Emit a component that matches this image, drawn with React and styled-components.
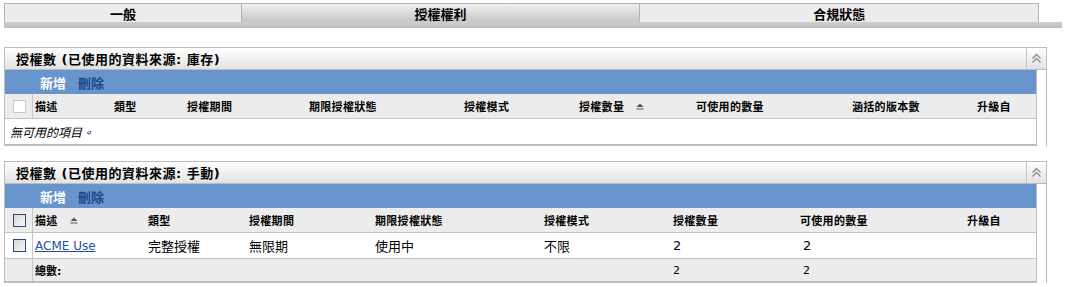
import React from "react";
import styled, { createGlobalStyle } from "styled-components";

const GlobalStyle = createGlobalStyle`
  body {
    margin: 0;
    background: #fff;
    font-family: "DejaVu Sans", "Noto Sans CJK TC", sans-serif;
    color: #000;
  }
`

const Page = styled.div`
  padding: 3px 0 0 4px;
`

const TabRow = styled.div`
  display: flex;
  width: 1035px;
  height: 19px;
`

const Tab = styled.div`
  box-sizing: border-box;
  width: ${p => p.w}px;
  margin-left: ${p => p.first ? 0 : -1}px;
  border: 1px solid #b4b4b4;
  border-bottom: none;
  background: ${p => p.active ? "linear-gradient(#f0f0f0, #c6c6c6)" : "#ececec"};
  display: flex;
  align-items: center;
  justify-content: center;
  font-size: 13px;
  font-weight: 700;
`

const TabBase = styled.div`
  width: 1058px;
  height: 6px;
  background: linear-gradient(#cfcfcf, #bcbcbc);
`

const Panel = styled.div`
  width: 1043px;
  margin-top: ${p => p.gap}px;
`

const PanelHeader = styled.div`
  box-sizing: border-box;
  height: 23px;
  display: flex;
  align-items: stretch;
  border: 1px solid #bcbcbc;
  background: linear-gradient(#ffffff, #e2e2e2);
`

const PanelTitle = styled.div`
  flex: 1;
  display: flex;
  align-items: center;
  padding-left: 11px;
  font-size: 13px;
  font-weight: 700;
  letter-spacing: 0.5px;
`

const CollapseButton = styled.div`
  width: 19px;
  border-left: 1px solid #c4c4c4;
  display: flex;
  align-items: center;
  justify-content: center;
`

const PanelBody = styled.div`
  display: flex;
`

const Content = styled.div`
  box-sizing: border-box;
  width: 1033px;
  border-left: 1px solid #bcbcbc;
  border-right: 1px solid #bcbcbc;
  border-bottom: 2px solid #bcbcbc;
`

const Gutter = styled.div`
  flex: 1;
  border-right: 1px solid #bcbcbc;
`

const Toolbar = styled.div`
  height: 24px;
  background: #6894cc;
  display: flex;
  align-items: center;
  gap: 12px;
  padding-left: 35px;
  font-size: 13px;
  font-weight: 700;
`

const ToolAction = styled.span`
  color: ${p => p.muted ? "#1c4888" : "#fff"};
`

const Row = styled.div`
  box-sizing: border-box;
  display: grid;
  grid-template-columns: ${p => p.cols};
  height: ${p => p.h}px;
  background: ${p => p.shade ? "#ececec" : "#fff"};
  border-bottom: ${p => p.last ? "none" : "1px solid #c4c4c4"};
`

const CheckCell = styled.div`
  border-right: 1px solid #c6c6c6;
  display: flex;
  align-items: center;
  justify-content: center;
`

const HeadCell = styled.div`
  display: flex;
  align-items: center;
  gap: 12px;
  padding-left: 2px;
  font-size: 11px;
  font-weight: 700;
  letter-spacing: 0.3px;
`

const Cell = styled.div`
  display: flex;
  align-items: center;
  padding-left: ${p => p.pad || 2}px;
  font-size: ${p => p.small ? 11 : 13}px;
  font-weight: ${p => p.bold ? 700 : 400};
`

const EmptyRow = styled.div`
  height: 25px;
  display: flex;
  align-items: center;
  padding-left: 5px;
  font-size: 12px;
  font-style: italic;
`

const Link = styled.a`
  color: #1f4fa0;
  font-size: 12px;
  text-decoration: underline;
`

const Box = styled.span`
  box-sizing: border-box;
  width: 13px;
  height: 13px;
  margin-left: 1px;
  border: 1px solid ${p => p.disabled ? "#c8c8c8" : "#2a4a78"};
  background: ${p => p.disabled ? "#fff" : "linear-gradient(135deg, #d6d6d6, #f8f8f8)"};
`

function SortIcon() {
  return (
    <svg width="8" height="8" viewBox="0 0 8 8">
      <path d="M0.5 5 L4 1.5 L7.5 5 Z" fill="#555" />
      <rect x="0.5" y="6.5" width="7" height="1" fill="#555" />
    </svg>
  );
}

function Collapse() {
  return (
    <CollapseButton>
      <svg width="11" height="11" viewBox="0 0 11 11">
        <path d="M1.5 5.5 L5.5 1.5 L9.5 5.5" fill="none" stroke="#8a8a8a" strokeWidth="1.3" />
        <path d="M1.5 9.5 L5.5 5.5 L9.5 9.5" fill="none" stroke="#8a8a8a" strokeWidth="1.3" />
      </svg>
    </CollapseButton>
  );
}

const colsStock = "28px 79px 73px 122px 155px 115px 117px 156px 125px 1fr";
const colsManual = "28px 113px 101px 126px 169px 129px 127px 167px 1fr";

function PanelFrame({ title, gap, children }) {
  return (
    <Panel gap={gap}>
      <PanelHeader>
        <PanelTitle>{title}</PanelTitle>
        <Collapse />
      </PanelHeader>
      <PanelBody>
        <Content>
          <Toolbar>
            <ToolAction>新增</ToolAction>
            <ToolAction muted>刪除</ToolAction>
          </Toolbar>
          {children}
        </Content>
        <Gutter />
      </PanelBody>
    </Panel>
  );
}

export default function App() {
  return (
    <>
      <GlobalStyle />
      <Page>
        <TabRow>
          <Tab first w={238}>一般</Tab>
          <Tab active w={400}>授權權利</Tab>
          <Tab w={400}>合規狀態</Tab>
        </TabRow>
        <TabBase />

        <PanelFrame title="授權數 (已使用的資料來源: 庫存)" gap={19}>
          <Row cols={colsStock} h={25} shade>
            <CheckCell><Box disabled /></CheckCell>
            <HeadCell>描述</HeadCell>
            <HeadCell>類型</HeadCell>
            <HeadCell>授權期間</HeadCell>
            <HeadCell>期限授權狀態</HeadCell>
            <HeadCell>授權模式</HeadCell>
            <HeadCell>授權數量<SortIcon /></HeadCell>
            <HeadCell>可使用的數量</HeadCell>
            <HeadCell>涵括的版本數</HeadCell>
            <HeadCell>升級自</HeadCell>
          </Row>
          <EmptyRow>無可用的項目。</EmptyRow>
        </PanelFrame>

        <PanelFrame title="授權數 (已使用的資料來源: 手動)" gap={15}>
          <Row cols={colsManual} h={25} shade>
            <CheckCell><Box /></CheckCell>
            <HeadCell>描述<SortIcon /></HeadCell>
            <HeadCell>類型</HeadCell>
            <HeadCell>授權期間</HeadCell>
            <HeadCell>期限授權狀態</HeadCell>
            <HeadCell>授權模式</HeadCell>
            <HeadCell>授權數量</HeadCell>
            <HeadCell>可使用的數量</HeadCell>
            <HeadCell>升級自</HeadCell>
          </Row>
          <Row cols={colsManual} h={26}>
            <CheckCell><Box /></CheckCell>
            <Cell><Link href="#">ACME Use</Link></Cell>
            <Cell>完整授權</Cell>
            <Cell>無限期</Cell>
            <Cell>使用中</Cell>
            <Cell>不限</Cell>
            <Cell>2</Cell>
            <Cell pad={5}>2</Cell>
            <Cell />
          </Row>
          <Row cols={colsManual} h={22} shade last>
            <CheckCell />
            <Cell small bold>總數:</Cell>
            <Cell />
            <Cell />
            <Cell />
            <Cell />
            <Cell small>2</Cell>
            <Cell small pad={5}>2</Cell>
            <Cell />
          </Row>
        </PanelFrame>
      </Page>
    </>
  );
}
